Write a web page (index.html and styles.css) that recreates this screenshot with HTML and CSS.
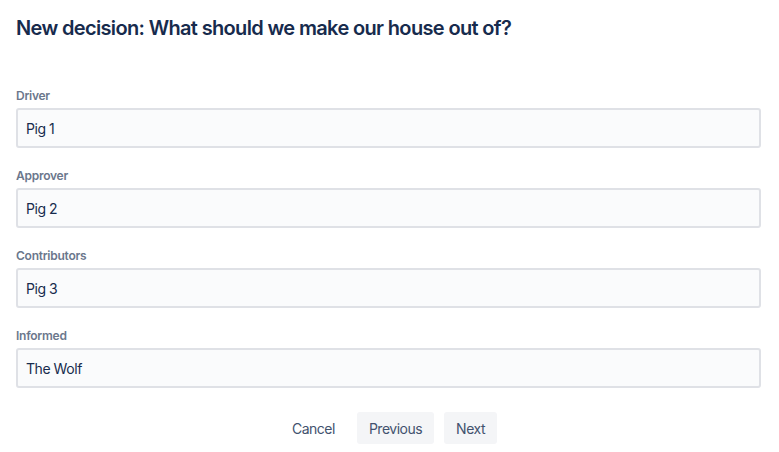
FILE: index.html
```html
<!DOCTYPE html>
<html lang="en">
<head>
<meta charset="utf-8">
<title>New decision</title>
<link rel="stylesheet" href="styles.css">
</head>
<body>
<main class="page">
  <h1 class="title">New decision: What should we make our house out of?</h1>
  <form class="form">
    <div class="field">
      <label class="label" for="driver">Driver</label>
      <input class="input" id="driver" type="text" value="Pig 1">
    </div>
    <div class="field">
      <label class="label" for="approver">Approver</label>
      <input class="input" id="approver" type="text" value="Pig 2">
    </div>
    <div class="field">
      <label class="label" for="contributors">Contributors</label>
      <input class="input" id="contributors" type="text" value="Pig 3">
    </div>
    <div class="field">
      <label class="label" for="informed">Informed</label>
      <input class="input" id="informed" type="text" value="The Wolf">
    </div>
    <div class="actions">
      <button type="button" class="btn btn-subtle">Cancel</button>
      <button type="button" class="btn">Previous</button>
      <button type="button" class="btn">Next</button>
    </div>
  </form>
</main>
</body>
</html>
```
FILE: styles.css
```css
* { box-sizing: border-box; }
html, body { margin: 0; background: #ffffff; }
body {
  font-family: "Inter", "Noto Sans", "Liberation Sans", sans-serif;
  color: #172B4D;
}
.page {
  padding: 16px 18px 0 16px;
}
.title {
  margin: 0;
  font-size: 20px;
  line-height: 24px;
  font-weight: 600;
  color: #172B4D;
  letter-spacing: -0.65px;
}
.form {
  display: flex;
  flex-direction: column;
  margin-top: 28px;
}
.field {
  display: flex;
  flex-direction: column;
  padding-top: 20px;
}
.label {
  font-size: 12px;
  line-height: 16px;
  font-weight: 600;
  color: #6B778C;
  margin-bottom: 4px;
  letter-spacing: -0.25px;
}
.input {
  height: 40px;
  width: 100%;
  border: 2px solid #DFE1E6;
  border-radius: 3px;
  background: #FAFBFC;
  padding: 0 8px;
  font-family: inherit;
  font-size: 14px;
  letter-spacing: -0.45px;
  color: #172B4D;
  outline: none;
}
.actions {
  display: flex;
  justify-content: center;
  gap: 10px;
  margin-top: 24px;
}
.btn {
  height: 32px;
  padding: 0 12px;
  border: none;
  border-radius: 3px;
  background: #F4F5F7;
  color: #42526E;
  font-family: inherit;
  font-size: 14px;
  letter-spacing: -0.5px;
  font-weight: 400;
  cursor: pointer;
}
.btn-subtle {
  background: transparent;
}
```
